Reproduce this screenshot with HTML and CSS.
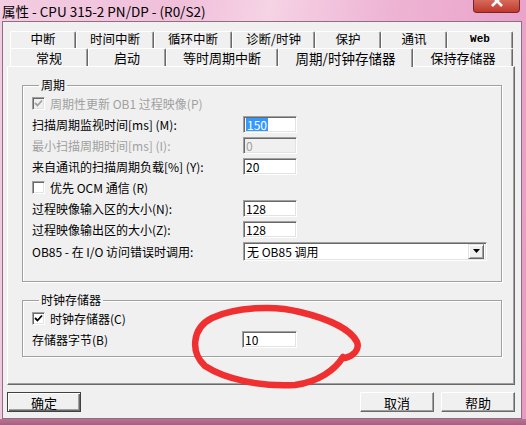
FILE: index.html
```html
<!DOCTYPE html>
<html lang="zh-CN">
<head>
    <meta charset="UTF-8">
    <title>属性 - CPU 315-2 PN/DP - (R0/S2)</title>
    <link rel="stylesheet" href="styles.css">
</head>
<body>
    <div class="window">
        <div class="titlebar">
            <span class="title">属性 - CPU 315-2 PN/DP - (R0/S2)</span>
            <span class="close">
                <svg width="14" height="8" viewBox="0 0 14 8"><path d="M2 -4 L12 6 M12 -4 L2 6" stroke="#fff" stroke-width="2.6"/></svg>
            </span>
        </div>

        <div class="client">
            <div class="tabs">
                <div class="tab-row back">
                    <div class="tab" style="width:66px">中断</div>
                    <div class="tab" style="width:78px">时间中断</div>
                    <div class="tab" style="width:78px">循环中断</div>
                    <div class="tab" style="width:83px">诊断/时钟</div>
                    <div class="tab" style="width:66px">保护</div>
                    <div class="tab" style="width:66px">通讯</div>
                    <div class="tab mono" style="width:66px">Web</div>
                </div>
                <div class="tab-row front">
                    <div class="tab" style="width:78px">常规</div>
                    <div class="tab" style="width:78px">启动</div>
                    <div class="tab" style="width:112px">等时周期中断</div>
                    <div class="tab active" style="width:135px">周期/时钟存储器</div>
                    <div class="tab" style="width:100px">保持存储器</div>
                </div>
            </div>

            <div class="panel">
                <fieldset class="group cycle">
                    <legend>周期</legend>
                    <div class="row disabled">
                        <span class="check checked"><svg width="9" height="9" viewBox="0 0 9 9"><path d="M1 4 L3.5 6.5 L8 1.5" fill="none" stroke="currentColor" stroke-width="1.8"/></svg></span>
                        <span>周期性更新 OB1 过程映像(P)</span>
                    </div>
                    <div class="row">
                        <span class="label">扫描周期监视时间[ms] (M):</span>
                        <span class="field"><span class="selected">150</span></span>
                    </div>
                    <div class="row disabled">
                        <span class="label">最小扫描周期时间[ms] (I):</span>
                        <span class="field off">0</span>
                    </div>
                    <div class="row">
                        <span class="label">来自通讯的扫描周期负载[%] (Y):</span>
                        <span class="field">20</span>
                    </div>
                    <div class="row">
                        <span class="check"></span>
                        <span>优先 OCM 通信 (R)</span>
                    </div>
                    <div class="row">
                        <span class="label">过程映像输入区的大小(N):</span>
                        <span class="field">128</span>
                    </div>
                    <div class="row">
                        <span class="label">过程映像输出区的大小(Z):</span>
                        <span class="field">128</span>
                    </div>
                    <div class="row tall">
                        <span class="label">OB85 - 在 I/O 访问错误时调用:</span>
                        <span class="combo">
                            <span class="combo-text">无 OB85 调用</span>
                            <span class="combo-btn"><svg width="7" height="4" viewBox="0 0 7 4"><path d="M0 0 H7 L3.5 4 Z" fill="#000"/></svg></span>
                        </span>
                    </div>
                </fieldset>

                <fieldset class="group clock">
                    <legend>时钟存储器</legend>
                    <div class="row">
                        <span class="check checked"><svg width="9" height="9" viewBox="0 0 9 9"><path d="M1 4 L3.5 6.5 L8 1.5" fill="none" stroke="currentColor" stroke-width="1.8"/></svg></span>
                        <span>时钟存储器(C)</span>
                    </div>
                    <div class="row short">
                        <span class="label">存储器字节(B)</span>
                        <span class="field">10</span>
                    </div>
                </fieldset>
            </div>

            <div class="buttons">
                <button class="btn default">确定</button>
                <span class="spacer"></span>
                <button class="btn">取消</button>
                <button class="btn">帮助</button>
            </div>
        </div>

        <!-- red marker drawn over the screenshot -->
        <svg class="mark" width="526" height="425" viewBox="0 0 526 425">
            <path d="M343 357 C335 370 318 382 295 385 C260 387 225 379 205 366 C190 352 192 328 212 318 C235 307 275 305 300 312 C325 318 350 328 357 342 C360 350 353 356 345 358"
                  fill="none" stroke="#f03030" stroke-width="6.5" stroke-linecap="round" stroke-linejoin="round"/>
        </svg>
    </div>
</body>
</html>
```

FILE: styles.css
```css
* {
    margin: 0;
    padding: 0;
    box-sizing: border-box;
}

body {
    width: 526px;
    height: 425px;
    overflow: hidden;
    font-family: "Noto Sans CJK SC", "Noto Sans", sans-serif;
    font-size: 12px;
    color: #000;
}

.window {
    position: relative;
    width: 526px;
    height: 425px;
    display: flex;
    flex-direction: column;
    background:
        linear-gradient(to bottom, rgba(0, 0, 0, 0) 419px, #b97392 419px, #a8607f 425px),
        linear-gradient(100deg, #f3cde2 0%, #f0bfda 30%, #f6d3e5 45%, #eeb4d4 65%, #e79ac6 100%);
}

.titlebar {
    height: 21px;
    display: flex;
    justify-content: space-between;
    align-items: flex-start;
    padding: 0 6px 0 2px;
}

.title {
    font-size: 13.5px;
    line-height: 22px;
    color: #000;
}

.close {
    width: 47px;
    height: 13px;
    display: flex;
    justify-content: center;
    align-items: flex-start;
    background: linear-gradient(to bottom, #d66a5c, #c0392b);
    border: 1px solid #6e2a2a;
    border-top: none;
    border-radius: 0 0 4px 4px;
}

.client {
    flex: 1;
    margin: 0 4px 6px 2px;
    border: 1px solid #8d6f80;
    background: #f0f0f0;
    padding: 9px 6px 0 4px;
}

/* tabs */
.tabs {
    padding-left: 3px;
}

.tab-row {
    display: flex;
}

.tab-row.back {
    height: 17px;
}

.tab-row.back .tab {
    font-size: 12.5px;
    padding-bottom: 2px;
}

.tab-row.front {
    height: 18px;
}

.tab {
    display: flex;
    justify-content: center;
    align-items: center;
    font-size: 13px;
    line-height: 14px;
    background: #f0f0f0;
    border-top: 1px solid #fff;
    border-left: 1px solid #fff;
    border-right: 1px solid #696969;
    box-shadow: inset -1px 0 0 #a0a0a0;
    border-radius: 2px 2px 0 0;
}

.tab-row.back .tab.mono {
    font-family: "Liberation Mono", monospace;
    font-size: 11px;
    font-weight: bold;
}

.tab.active {
    position: relative;
    z-index: 2;
    height: 19px;
    margin-bottom: -1px;
    font-size: 13.5px;
    line-height: 15px;
    padding-top: 1px;
}

/* page panel */
.panel {
    height: 319px;
    border-top: 1px solid #fff;
    border-left: 1px solid #fff;
    border-right: 1px solid #696969;
    border-bottom: 1px solid #696969;
    box-shadow: inset -1px -1px 0 #a0a0a0;
    padding: 10px 12px 0 14px;
}

.group {
    border: 1px solid #a0a0a0;
    box-shadow: inset 1px 1px 0 #fff, 1px 1px 0 #fff;
    padding: 0 0 0 9px;
}

.group legend {
    margin-left: 7px;
    padding: 0 2px;
    line-height: 16px;
    font-size: 12px;
}

.group.cycle {
    height: 205px;
}

.group.clock {
    margin-top: 10px;
    height: 65px;
}

.row {
    display: flex;
    align-items: center;
    height: 21px;
}

.row.tall {
    height: 22px;
}

.row.short {
    height: 20px;
}

.row.disabled {
    color: #a0a0a0;
}

.label {
    width: 211px;
    flex-shrink: 0;
}

.clock .label {
    width: 210px;
}

.check {
    width: 13px;
    height: 13px;
    margin-right: 5px;
    background: #fff;
    border-top: 1px solid #a0a0a0;
    border-left: 1px solid #a0a0a0;
    border-right: 1px solid #fff;
    border-bottom: 1px solid #fff;
    box-shadow: inset 1px 1px 0 #696969, inset -1px -1px 0 #e3e3e3;
    display: flex;
    justify-content: center;
    align-items: center;
    color: #000;
}

.disabled .check {
    background: #f0f0f0;
    color: #a0a0a0;
}

.field {
    width: 54px;
    height: 17px;
    background: #fff;
    border-top: 1px solid #a0a0a0;
    border-left: 1px solid #a0a0a0;
    border-right: 1px solid #fff;
    border-bottom: 1px solid #fff;
    box-shadow: inset 1px 1px 0 #696969, inset -1px -1px 0 #e3e3e3;
    padding-left: 2px;
    line-height: 15px;
    font-size: 12px;
    color: #000;
}

.clock .field {
    width: 55px;
    height: 17px;
}

.field.off {
    background: #f0f0f0;
    color: #a0a0a0;
}

.selected {
    display: inline-block;
    background: #3399ff;
    color: #fff;
    padding: 0 1px;
    line-height: 13px;
    margin-top: 1px;
}

.combo {
    width: 244px;
    height: 19px;
    display: flex;
    align-items: center;
    background: #fff;
    border-top: 1px solid #a0a0a0;
    border-left: 1px solid #a0a0a0;
    border-right: 1px solid #fff;
    border-bottom: 1px solid #fff;
    box-shadow: inset 1px 1px 0 #696969, inset -1px -1px 0 #e3e3e3;
    padding: 0 2px 0 3px;
}

.combo-text {
    flex: 1;
}

.combo-btn {
    width: 16px;
    height: 15px;
    display: flex;
    justify-content: center;
    align-items: center;
    background: #f0f0f0;
    border-top: 1px solid #e3e3e3;
    border-left: 1px solid #e3e3e3;
    border-right: 1px solid #696969;
    border-bottom: 1px solid #696969;
    box-shadow: inset 1px 1px 0 #fff, inset -1px -1px 0 #a0a0a0;
}

/* dialog buttons */
.buttons {
    display: flex;
    gap: 7px;
    margin-top: 7px;
    height: 20px;
}

.spacer {
    flex: 1;
}

.btn {
    width: 74px;
    height: 20px;
    font-family: inherit;
    font-size: 13px;
    background: #f0f0f0;
    border-top: 1px solid #fff;
    border-left: 1px solid #fff;
    border-right: 1px solid #696969;
    border-bottom: 1px solid #696969;
    box-shadow: inset -1px -1px 0 #a0a0a0;
}

.btn.default {
    border: 1px solid #404040;
    box-shadow: inset 1px 1px 0 #fff, inset -1px -1px 0 #696969, inset -2px -2px 0 #a0a0a0;
}

.mark {
    position: absolute;
    left: 0;
    top: 0;
    pointer-events: none;
}
```
